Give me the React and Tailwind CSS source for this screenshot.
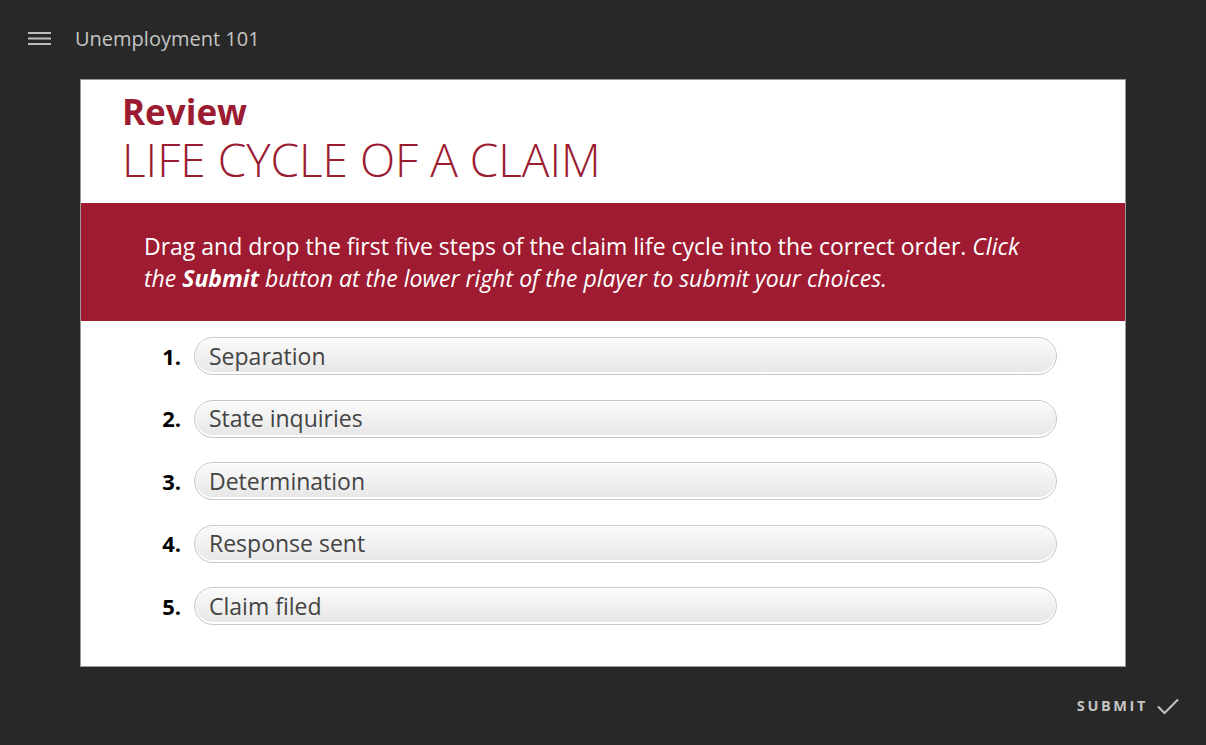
import React from "react";

const items = ["Separation", "State inquiries", "Determination", "Response sent", "Claim filed"];

export default function App() {
  return (
    <div
      className="w-[1206px] h-[745px] bg-[#282828] flex flex-col overflow-hidden"
      style={{ fontFamily: '"Open Sans", "Noto Sans", sans-serif' }}
    >
      <div className="h-[79px] flex items-center pl-[28px] pb-[2px]">
        <svg width="23" height="13" viewBox="0 0 23 13" className="mr-[24px]">
          <rect x="0" y="0" width="23" height="2" fill="#bdbdbd" />
          <rect x="0" y="5.5" width="23" height="2" fill="#bdbdbd" />
          <rect x="0" y="11" width="23" height="2" fill="#bdbdbd" />
        </svg>
        <span className="text-[20px] text-[#c4c4c4]">Unemployment 101</span>
      </div>
      <div className="ml-[80px] w-[1046px] h-[588px] bg-white border border-[#9a9a9a] flex flex-col">
        <div className="pl-[41px] pt-[12px]">
          <div className="text-[35px] font-bold text-[#9b1b30] leading-[40px]">Review</div>
          <div className="text-[46px] font-light text-[#9b1b30] leading-[54px]">LIFE CYCLE OF A CLAIM</div>
        </div>
        <div className="mt-[17px] bg-[#9e1b32] h-[118px] pl-[63px] pr-[60px] pt-[27px] text-white text-[23px] leading-[32px] flex flex-col">
          <div className="whitespace-nowrap">
            Drag and drop the first five steps of the claim life cycle into the correct order. <em>Click</em>
          </div>
          <div className="whitespace-nowrap italic">
            the <strong>Submit</strong> button at the lower right of the player to submit your choices.
          </div>
        </div>
        <div className="mt-[16px] flex flex-col gap-[24.5px]">
          {items.map((t, i) => (
            <div key={t} className="flex items-center">
              <div className="w-[113px] text-right pr-[13px] text-[22px] font-bold text-black">{i + 1}.</div>
              <div className="w-[863px] h-[38px] rounded-full border border-[#c9c9c9] bg-gradient-to-b from-[#fbfbfb] to-[#e6e6e6] shadow-[inset_0_-2px_0_#ffffff,inset_0_1px_0_#ffffff] flex items-center pl-[14px] text-[23px] text-[#444444]">
                {t}
              </div>
            </div>
          ))}
        </div>
      </div>
      <div className="flex-1 flex items-center justify-end pr-[26px]">
        <span className="text-[14.5px] font-bold tracking-[2.6px] text-[#c4c4c4] mr-[8px]">SUBMIT</span>
        <svg width="24" height="18" viewBox="0 0 24 18">
          <path d="M2 9.5 L8.5 16 L22 2.5" fill="none" stroke="#c4c4c4" strokeWidth="2" />
        </svg>
      </div>
    </div>
  );
}
